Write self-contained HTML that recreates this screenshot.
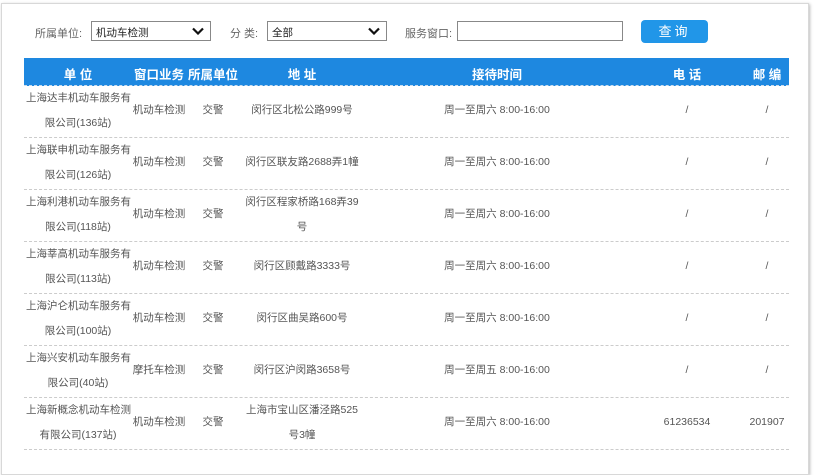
<!DOCTYPE html>
<html><head><meta charset="utf-8"><style>
body{margin:0;width:814px;height:456px;overflow:hidden;background:#fff;font-family:"Liberation Sans","Noto Sans CJK SC",sans-serif;color:#555;}
.frame{position:absolute;left:1px;top:3px;width:806px;height:470px;border:1px solid #d8d8d8;box-shadow:1px 1px 3px #bbb;}
.lbl{position:absolute;top:25px;font-size:11px;color:#666;}
.sel{position:absolute;top:21px;height:20px;border:1px solid #888;box-sizing:border-box;font-size:10.5px;color:#222;padding:3px 4px;}
.sel svg{position:absolute;right:6px;top:5px}
.btn{position:absolute;left:641px;top:20px;width:67px;height:23px;background:#2196e8;border-radius:4px;color:#fff;font-size:13px;text-align:center;line-height:23px;letter-spacing:3px}
.hd{position:absolute;left:24px;top:58px;width:765px;height:27px;background:#1e88e0;border-bottom:1px dashed #cde;color:#fff;font-size:12.5px;font-weight:bold}
.hd span{position:absolute;top:6px;transform:translateX(-50%);white-space:nowrap}
.row{position:absolute;left:24px;width:765px;height:52px;border-bottom:1px dashed #ccc;font-size:10.5px}
.row span{position:absolute;transform:translateX(-50%);white-space:nowrap;line-height:13px}
.u1{left:52px!important;top:7px}
.u2{top:32px}
.m{top:19px}
.a1{top:7px}.a2{top:32px}
</style></head><body>
<div class="frame"></div>
<div class="lbl" style="left:35px">所属单位:</div>
<div class="sel" style="left:91px;width:120px">机动车检测<svg width="12" height="8" viewBox="0 0 12 8"><path d="M1 1.5L6 6.5L11 1.5" stroke="#111" stroke-width="2.2" fill="none"/></svg></div>
<div class="lbl" style="left:230px">分 类:</div>
<div class="sel" style="left:267px;width:120px">全部<svg width="12" height="8" viewBox="0 0 12 8"><path d="M1 1.5L6 6.5L11 1.5" stroke="#111" stroke-width="2.2" fill="none"/></svg></div>
<div class="lbl" style="left:405px">服务窗口:</div>
<div class="sel" style="left:457px;width:166px"></div>
<div class="btn">查询</div>
<div class="hd">
<span style="left:54px">单 位</span><span style="left:135px">窗口业务</span><span style="left:189px">所属单位</span><span style="left:278px">地 址</span><span style="left:473px">接待时间</span><span style="left:663px">电 话</span><span style="left:743px">邮 编</span>
</div>
<div id="rows"></div>
<script>
var d=[["上海达丰机动车服务有","限公司(136站)","机动车检测","闵行区北松公路999号","","周一至周六 8:00-16:00","/","/"],
["上海联申机动车服务有","限公司(126站)","机动车检测","闵行区联友路2688弄1幢","","周一至周六 8:00-16:00","/","/"],
["上海利港机动车服务有","限公司(118站)","机动车检测","闵行区程家桥路168弄39","号","周一至周六 8:00-16:00","/","/"],
["上海莘高机动车服务有","限公司(113站)","机动车检测","闵行区顾戴路3333号","","周一至周六 8:00-16:00","/","/"],
["上海沪仑机动车服务有","限公司(100站)","机动车检测","闵行区曲吴路600号","","周一至周六 8:00-16:00","/","/"],
["上海兴安机动车服务有","限公司(40站)","摩托车检测","闵行区沪闵路3658号","","周一至周五 8:00-16:00","/","/"],
["上海新概念机动车检测","有限公司(137站)","机动车检测","上海市宝山区潘泾路525","号3幢","周一至周六 8:00-16:00","61236534","201907"]];
var h="";d.forEach(function(r,i){var t=85+i*52;var two=r[4]!="";
h+='<div class="row" style="top:'+t+'px"><span class="u1" style="transform:none;left:2px!important">'+r[0]+'</span><span class="u2" style="left:54px">'+r[1]+'</span><span class="m" style="left:135px">'+r[2]+'</span><span class="m" style="left:189px">交警</span>'+
(two?'<span class="a1" style="left:278px">'+r[3]+'</span><span class="a2" style="left:278px">'+r[4]+'</span>':'<span class="m" style="left:278px">'+r[3]+'</span>')+
'<span class="m" style="left:473px">'+r[5]+'</span><span class="m" style="left:663px">'+r[6]+'</span><span class="m" style="left:743px">'+r[7]+'</span></div>';});
document.getElementById("rows").innerHTML=h;
</script>
</body></html>
